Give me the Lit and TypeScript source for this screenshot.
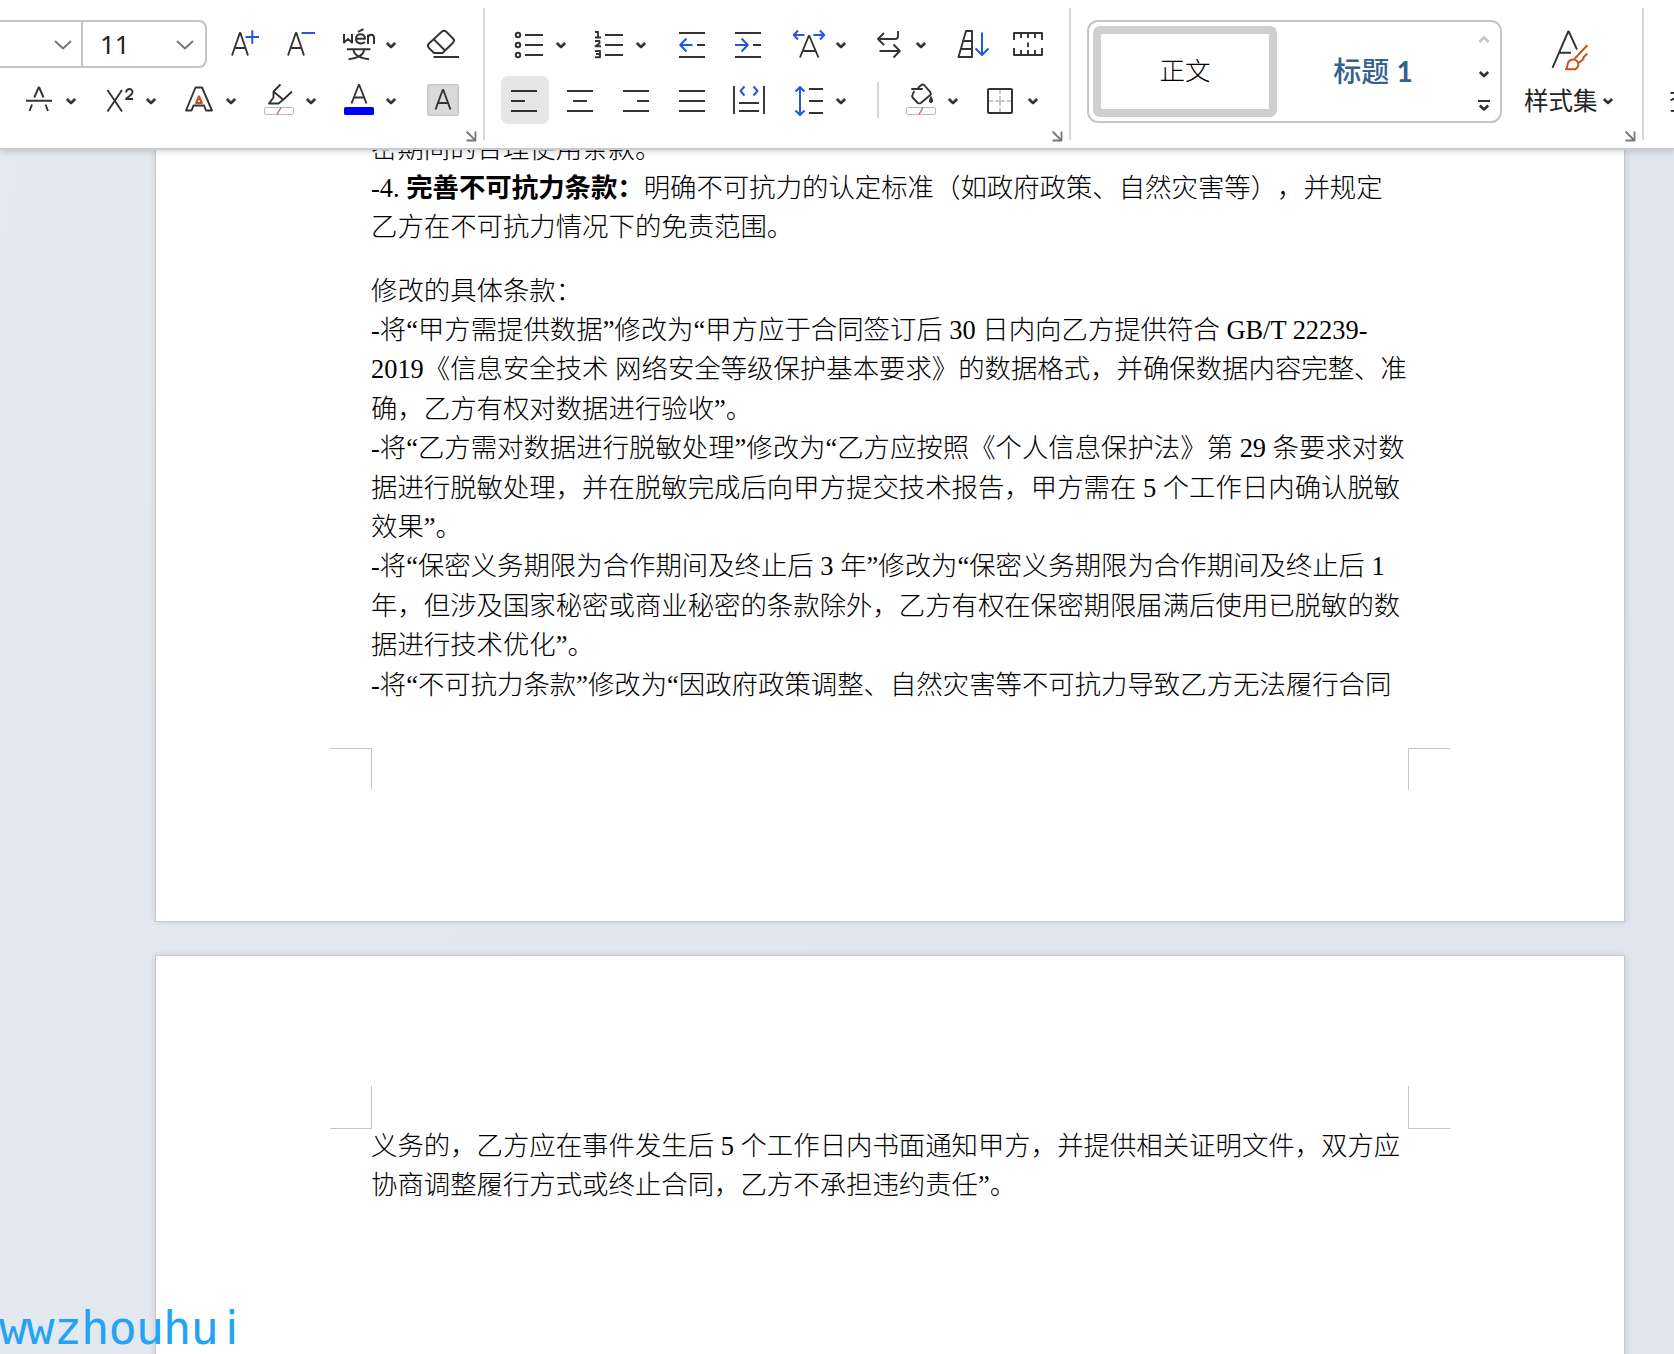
import { LitElement, html, svg, css } from "lit";
import { customElement } from "lit/decorators.js";

const K = "#333";
const B = "#2456e0";

// Ribbon artwork shares one coordinate system with the toolbar strip.
const chev = (x: number, y: number, c = K) =>
  svg`<path d="M${x - 4.2} ${y - 2.1}L${x} ${y + 1.9}L${x + 4.2} ${y - 2.1}" stroke=${c} stroke-width="2.7" fill="none"/>`;
const launcher = (x: number) =>
  svg`<path d="M${x} 131.5l8.5 8.5M${x + 9} 131.5v9h-9" stroke="#777" stroke-width="1.8" fill="none"/>`;
const rows = (list: number[][]) =>
  list.map(([a, b, y]) => svg`<path d="M${a} ${y}H${b}" stroke=${K} stroke-width="2"/>`);
const blue = (d: string) => svg`<path d=${d} stroke=${B} stroke-width="2" fill="none"/>`;
const ink = (d: string, w = 1.9) => svg`<path d=${d} stroke=${K} stroke-width=${w} fill="none"/>`;

const fontTools = [
  ink("M232 55.5L239.800 33h.6L248 55.5M234.800 48h10.600"),
  blue("M245.500 37h13.500M252.300 30.300v13.400"),
  ink("M288 55.5L295.800 33h.6L304 55.5M290.800 48h10.600"),
  blue("M301.500 33h13.500"),
  ink("M344 34v8.500l4-3.500 4 3.500v-8.500M355.500 38.700h9.500c0-6-9-6-9 0c0 5.500 6 5.500 9 3.300M358 31.800l5.500-2.600M368 44v-9.500M368 38c.5-4.500 6-4.500 6 0v6", 2),
  ink("M347 49.300h23.500M353.500 49.300c0 6 8.500 9 15.500 10M364 49.300c0 6-8 9-15.500 10", 2),
  chev(391, 45),
  ink("M442 31.500q2-1.500 4 0l7 7q2 2 0 4.200l-10.500 10.300h-8.500l-5-5q-2.200-2.500 0-4.500zM434 39.500l11 11M433.500 57H459"),
  ink("M34.300 97.500L38.600 87.500h.6L43.500 97.500M26 100.800h26M32 104.500l-2.500 6.500M45.500 104.500l2.500 6.500"),
  chev(71, 101),
  ink("M107.500 90l14.500 21.500M122 90l-14.500 21.500M126 92.500c.5-4.500 6.500-4.500 6.500-.5c0 3-4 4-6.500 7h7"),
  chev(151, 101),
  ink("M195.500 87.500h6.500l10 23h-6l-2-5h-10.500l-2 5h-5.500z"),
  svg`<path d="M199 96.500l2.800 6.500h-5.600z" fill="none" stroke="#c8501a" stroke-width="2.200"/>`,
  chev(231, 101),
  ink("M280.500 84.500l-7 7v6l-4.500 6h9.500l5-4 8.500-8M273.500 91.500l10 8.500"),
  svg`<rect x="264.500" y="107.500" width="29" height="7" rx="1.500" fill="#fff" stroke="#b8b8b8"/><path d="M277 114.500l4-7" stroke="#e05050" stroke-width="1.300"/>`,
  chev(311, 101),
  ink("M351.500 103.500L358.700 85h.6L366.500 103.500M354 97.500h10"),
  svg`<rect x="344" y="107" width="30" height="8" rx="1.500" fill="#00f"/>`,
  chev(391, 101),
  svg`<rect x="427.800" y="84.800" width="30.400" height="30.400" rx="1" fill="#dadada" stroke="#c8c8c8" stroke-width="1.600"/>`,
  ink("M435.500 109.500L442.700 90h.6L450.500 109.500M438 103h10"),
  launcher(466.500),
];

const paraTools = [
  ...[35, 45, 55].map((y) => svg`<circle cx="518" cy=${y} r="2.200" fill="none" stroke=${K} stroke-width="2"/>`),
  ...rows([[525, 543, 35], [525, 543, 45], [525, 543, 55]]), chev(561, 45),
  ink("M595 32h3v5.500M595 37.500h6M595 41h4.500v2.300l-4 3h5.500M595 51h5v3h-4M600 54v3.200h-5"),
  ...rows([[605, 623, 35], [605, 623, 45], [605, 623, 55]]), chev(641, 45),
  ...rows([[679, 705, 33], [697, 705, 45], [679, 705, 57]]), blue("M686.500 38.500l-6.300 6.500 6.300 6.500M680.500 45h12"),
  ...rows([[735, 761, 33], [753, 761, 45], [735, 761, 57]]), blue("M741.500 38.500l6.300 6.500-6.300 6.500M735 45h12.500"),
  blue("M798 30.500l-4.200 4.500 4.200 4.500M794 35h10.500M820 30.500l4.200 4.500-4.200 4.500M824 35h-10.500"),
  ink("M800 57.500L808.700 36h.6L818.500 57.500M803 51h12.500"), chev(841, 45),
  ink("M884 33l-6 6 6 6M878 39h17q3 0 3-3v-5M879.500 51h20M893.500 44.500l6.300 6.500-6.300 6.500"), chev(921, 45),
  ink("M966 31h6v26h-13.500zM963.500 41H972M961 49H972"),
  blue("M982 32.500v22.500M975.500 48.500l6.500 6.500 6.500-6.500"),
  ink("M1014 40v-7h28v7M1021 33v5M1028 33v5M1035 33v5M1014 48v7h28v-7M1021 55v-5M1028 55v-5M1035 55v-5M1028 42.500v4.500"),
  svg`<rect x="501" y="76" width="48" height="48" rx="7" fill="#e6e6e6"/>`,
  ...rows([[511, 537, 91], [511, 525, 101], [511, 537, 111]]),
  ...rows([[567, 593, 91], [573, 587, 101], [567, 593, 111]]),
  ...rows([[623, 649, 91], [637, 649, 101], [623, 649, 111]]),
  ...rows([[679, 705, 91], [679, 705, 101], [679, 705, 111]]),
  ...rows([[739, 759, 103], [739, 759, 111]]), ink("M734 86v28M764 86v28"),
  blue("M744.500 86.500l-4 4.500 4 4.500M753.500 86.500l4 4.500-4 4.500"),
  blue("M800 88v26M795.500 91.500l4.500-4.500 4.500 4.500M795.500 110.500l4.500 4.500 4.500-4.500"),
  ...rows([[809, 823, 89], [809, 823, 101], [809, 823, 113]]), chev(841, 101),
  svg`<path d="M878 82v36" stroke="#d6d6d6" stroke-width="2"/>`,
  ink("M911.300 89h11.400M918 88l3.300-3q1.400-1 2.800 0l6.200 7.200q1 1.500 0 2.800l-9.500 8q-1.500.8-3 0l-5.200-5.500q-1-1.800.2-3.200q.6-2 1.600-3.300"),
  svg`<path d="M931 96.500l1.500 3.500q.5 2.500-1.500 2.700q-2-.2-1.500-2.700z" fill=${K} stroke=${K}/>`,
  svg`<rect x="906.500" y="107.500" width="29" height="7" rx="1.500" fill="#fff" stroke="#b8b8b8"/><path d="M919 114.500l4-7" stroke="#e05050" stroke-width="1.300"/>`,
  chev(953, 101),
  svg`<path d="M1000 90v4M1000 96v10M1000 108v4M989 101h4M995 101h10M1007 101h4" stroke="#c8c8c8" stroke-width="2"/><rect x="988" y="89" width="24" height="24" rx="1" fill="none" stroke=${K} stroke-width="2"/>`,
  chev(1033, 101), launcher(1052.500),
];

const styleTools = [
  ink("M1552.500 67.800L1568.200 31.500h.6L1577 49.500M1559.500 52.800h11.500"),
  svg`<path d="M1587.300 45.300l-13 13.800M1587.300 53.500l-3.800 3.800v1.700l-5 4M1566 69.200c2-2.600 1-5.200 2.700-7.800q4-3.500 8.300-.4q3.500 4.800-1.500 8.200z" fill="none" stroke="#c8501a" stroke-width="2"/>`,
  chev(1608, 101), launcher(1625.500),
];

interface Line { t: string; b?: string; pre?: string; gap?: boolean }
const first: Line[] = [
  { t: "密期间的合理使用条款。" },
  { pre: "-4. ", b: "完善不可抗力条款：", t: "明确不可抗力的认定标准（如政府政策、自然灾害等），并规定" },
  { t: "乙方在不可抗力情况下的免责范围。" },
  { t: "修改的具体条款：", gap: true },
  { t: "-将“甲方需提供数据”修改为“甲方应于合同签订后 30 日内向乙方提供符合 GB/T 22239-" },
  { t: "2019《信息安全技术 网络安全等级保护基本要求》的数据格式，并确保数据内容完整、准" },
  { t: "确，乙方有权对数据进行验收”。" },
  { t: "-将“乙方需对数据进行脱敏处理”修改为“乙方应按照《个人信息保护法》第 29 条要求对数" },
  { t: "据进行脱敏处理，并在脱敏完成后向甲方提交技术报告，甲方需在 5 个工作日内确认脱敏" },
  { t: "效果”。" },
  { t: "-将“保密义务期限为合作期间及终止后 3 年”修改为“保密义务期限为合作期间及终止后 1" },
  { t: "年，但涉及国家秘密或商业秘密的条款除外，乙方有权在保密期限届满后使用已脱敏的数" },
  { t: "据进行技术优化”。" },
  { t: "-将“不可抗力条款”修改为“因政府政策调整、自然灾害等不可抗力导致乙方无法履行合同" },
];
const second: Line[] = [
  { t: "义务的，乙方应在事件发生后 5 个工作日内书面通知甲方，并提供相关证明文件，双方应" },
  { t: "协商调整履行方式或终止合同，乙方不承担违约责任”。" },
];
const renderLine = (l: Line) =>
  html`<div class="line ${l.gap ? "gap" : ""}">${l.pre ?? ""}${l.b ? html`<b>${l.b}</b>` : ""}${l.t}</div>`;

@customElement("app-root")
export class AppRoot extends LitElement {
  static styles = css`
    :host { display: block; width: 1674px; height: 1354px; overflow: hidden; position: relative;
      background: linear-gradient(100deg, #e4eaee 0%, #e3e7ef 40%, #e0e4ed 100%); }
    * { box-sizing: border-box; }
    .ribbon { position: relative; z-index: 2; height: 150px; background: #fff; border-bottom: 2px solid #c8cbcf;
      display: flex; box-shadow: 0 1px 7px rgba(0,0,0,.2); }
    .art { position: absolute; left: 0; top: 0; pointer-events: none; }
    .group { flex: none; height: 132px; margin-top: 8px; border-right: 2px solid #d6d6d6; }
    .font { width: 485px; padding-top: 12px; }
    .para { width: 586px; }
    .styles { width: 573px; padding: 12px 0 0 16px; display: flex; }
    .combo { width: 207px; height: 48px; border: 2px solid #c6c6c6; border-left: 0; border-radius: 0 8px 8px 0; display: flex; }
    .face { width: 83px; border-right: 2px solid #c6c6c6; }
    .size { padding-left: 17px; font: 26px/45px "Noto Sans", sans-serif; color: #222; }
    .gallery { flex: none; width: 415px; height: 103px; border: 2px solid #c6c6c6; border-radius: 11px; padding: 4px; display: flex; font: 25.500px/75px "Liberation Serif", "Noto Sans CJK SC", serif; }
    .normal { flex: none; width: 184px; height: 91px; border: 8px solid #cfcfcf; border-radius: 7px; text-align: center; font-weight: 300; color: #000; }
    .heading { width: 192px; text-align: center; font: 500 28px/91px Lato, "Noto Sans CJK SC", sans-serif; color: #365f91; }
    .heading b { font-weight: 700; }
    .set { padding: 61px 0 0 22px; font: 24.500px/38px "Noto Sans CJK SC", sans-serif; color: #222; white-space: nowrap; }
    .next { padding: 81px 0 0 25px; font: 24.500px/38px "Noto Sans CJK SC", sans-serif; color: #222; white-space: nowrap; width: 30px; overflow: hidden; }
    .page { margin-left: 155px; width: 1470px; background: #fff; border: 1px solid #c8c8ca; padding-left: 215px;
      box-shadow: 0 0 6px rgba(0,0,0,.12); position: relative; }
    .one { height: 772px; border-top: 0; overflow: hidden; }
    .two { margin-top: 33px; height: 420px; padding-top: 170.600px; }
    .text { font: 26.400px/39.400px "Liberation Serif", "Noto Sans CJK SC", serif; font-weight: 300; color: #000; text-spacing-trim: space-all; }
    .one .text { margin-top: -20.500px; }
    .line { height: 39.400px; white-space: pre; }
    .line b { font-weight: 700; }
    .gap { margin-top: 24px; }
    .corner { position: absolute; width: 42px; height: 42px; border: 0 solid #c4c4c4; }
    .tl { left: 174px; top: 598px; border-width: 1px 1px 0 0; }
    .tr { left: 1252px; top: 598px; border-width: 1px 0 0 1px; }
    .bl { left: 174px; top: 130px; height: 43px; border-width: 0 1px 1px 0; }
    .br { left: 1252px; top: 130px; height: 43px; border-width: 0 0 1px 1px; }
    .mark { position: absolute; z-index: 3; left: -1px; top: 1300px; font: 47px/56px "DejaVu Sans Mono", monospace; color: #24a3f5; letter-spacing: -0.950px; white-space: pre; }
    .mark span { font-family: "DejaVu Sans", sans-serif; margin-left: 7.500px; }
  `;

  render() {
    return html`
      <div class="ribbon">
        <div class="group font"><div class="combo"><div class="face"></div><div class="size">11</div></div></div>
        <div class="group para"></div>
        <div class="group styles">
          <div class="gallery"><div class="normal">正文</div><div class="heading">标题 <b>1</b></div></div>
          <div class="set">样式集</div>
        </div>
        <div class="next">查找</div>
        <svg class="art" width="1674" height="150" viewBox="0 0 1674 150" stroke-linejoin="round">
          <path d="M55 41l8 7.500 8-7.500M177 41l8 7.500 8-7.500" fill="none" stroke="#777" stroke-width="1.900"/>
          ${fontTools}${paraTools}${styleTools}
          <path d="M1479.500 42l4.500-4.500 4.500 4.500" fill="none" stroke="#c4c4c4" stroke-width="2.700"/>
          ${chev(1484, 74)}${chev(1484, 107.5)}
          <path d="M1478 101h12" stroke="#333" stroke-width="2"/>
        </svg>
      </div>
      <div class="page one">
        <div class="text">${first.map(renderLine)}</div>
        <i class="corner tl"></i><i class="corner tr"></i>
      </div>
      <div class="page two">
        <div class="text">${second.map(renderLine)}</div>
        <i class="corner bl"></i><i class="corner br"></i>
      </div>
      <div class="mark">wwzhouhu<span>i</span></div>`;
  }
}
